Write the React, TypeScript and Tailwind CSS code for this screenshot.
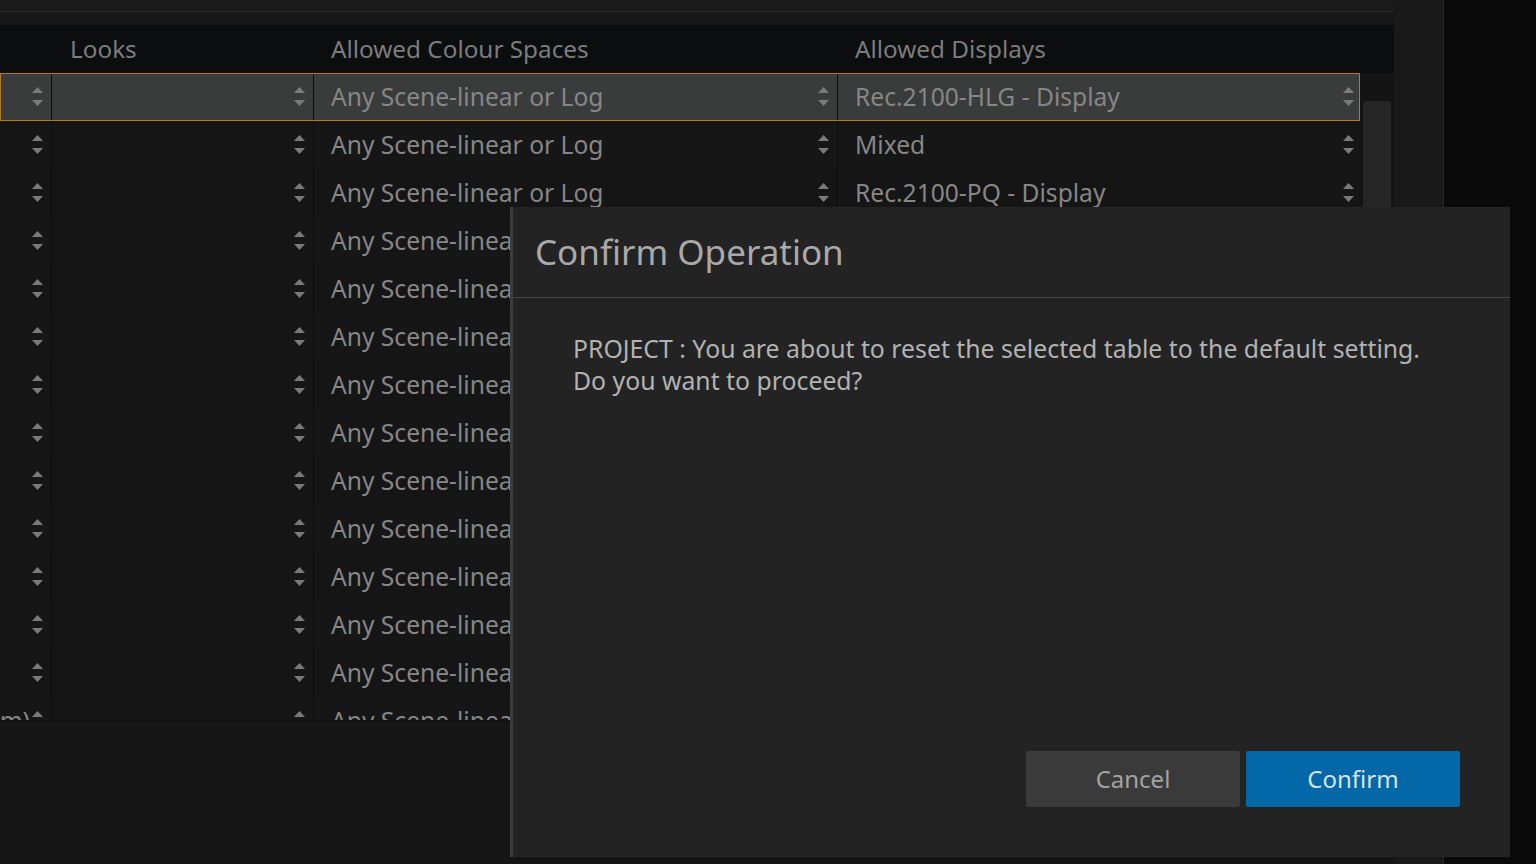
const font = { fontFamily: '"Noto Sans", "Open Sans", sans-serif' };

const Spinner = () => (
  <svg width="11" height="20" viewBox="0 0 11 20" className="shrink-0">
    <polygon points="0,6 5.5,0 11,6" fill="#7a7a7a" />
    <polygon points="0,13 11,13 5.5,19" fill="#7a7a7a" />
  </svg>
);

type Row = { colour: string; display: string; left?: string };

const rows: Row[] = [
  { colour: "Any Scene-linear or Log", display: "Rec.2100-HLG - Display" },
  { colour: "Any Scene-linear or Log", display: "Mixed" },
  { colour: "Any Scene-linear or Log", display: "Rec.2100-PQ - Display" },
  ...Array.from({ length: 10 }, () => ({ colour: "Any Scene-linear or Log", display: "" })),
  { colour: "Any Scene-linear or Log", display: "", left: "m)" },
];

const TableRow = ({ row, index }: { row: Row; index: number }) => {
  const selected = index === 0;
  const bg = selected ? "bg-[#3a3b3b]" : index % 2 === 0 ? "bg-[#151515]" : "bg-[#161616]";
  return (
    <div
      className={`relative flex h-[48px] w-[1360px] shrink-0 text-[24.6px] text-[#868686] ${bg} ${
        selected ? "after:absolute after:inset-0 after:border after:border-[#b07a22] after:pointer-events-none" : ""
      }`}
    >
      <div className="flex w-[52px] shrink-0 items-center justify-end border-r border-[#0c0c0c] pr-[8px]">
        {row.left && <span className="mr-[2px] whitespace-nowrap">{row.left}</span>}
        <Spinner />
      </div>
      <div className="flex w-[262px] shrink-0 items-center justify-end border-r border-[#0c0c0c] pr-[8px]">
        <Spinner />
      </div>
      <div className="flex w-[524px] shrink-0 items-center justify-between border-r border-[#0c0c0c] pl-[17px] pr-[8px]">
        <span className="whitespace-nowrap">{row.colour}</span>
        <Spinner />
      </div>
      <div className="flex w-[522px] shrink-0 items-center justify-between pl-[17px] pr-[6px]">
        <span className="whitespace-nowrap">{row.display}</span>
        <Spinner />
      </div>
    </div>
  );
};

export default function App() {
  return (
    <div className="relative flex h-[864px] w-[1536px] overflow-hidden bg-[#0a0a0a]" style={font}>
      <div className="flex w-[1444px] shrink-0 border-r border-[#2a2a2a] bg-[#151515]">
        <div className="flex w-[1394px] shrink-0 flex-col">
          <div className="h-[11px] bg-[#1a1a1a]" />
          <div className="h-[1px] bg-[#2b2b2b]" />
          <div className="h-[13px] bg-[#171717]" />
          <div className="flex h-[48px] items-center bg-[#0b0d0e] text-[24.3px] text-[#7c7c7c]">
            <div className="w-[52px] shrink-0" />
            <div className="w-[262px] shrink-0 pl-[18px]">Looks</div>
            <div className="w-[524px] shrink-0 pl-[17px]">Allowed Colour Spaces</div>
            <div className="pl-[17px]">Allowed Displays</div>
          </div>
          <div className="flex h-[647px] overflow-hidden">
            <div className="flex w-[1360px] shrink-0 flex-col">
              {rows.map((r, i) => (
                <TableRow key={i} row={r} index={i} />
              ))}
            </div>
            <div className="flex-1 bg-[#141414] px-[3px] pt-[28px]">
              <div className="h-[360px] rounded-[3px] bg-[#262626]" />
            </div>
          </div>
          <div className="flex-1 border-t border-[#0f0f0f] bg-[#151515]" />
        </div>
        <div className="flex-1 bg-[#191919]" />
      </div>

      <div className="absolute left-[510px] top-[207px] flex h-[650px] w-[1000px] flex-col border-l-[3px] border-[#3d3d3d] bg-[#232323]">
        <div className="flex h-[91px] items-center border-b border-[#454545] pl-[22px] text-[35px] text-[#a9a9a9]">
          Confirm Operation
        </div>
        <div className="flex-1 pl-[60px] pt-[34px] text-[24.8px] leading-[32px] text-[#b2b2b2]">
          <p>PROJECT : You are about to reset the selected table to the default setting.</p>
          <p>Do you want to proceed?</p>
        </div>
        <div className="flex justify-end gap-[6px] pb-[50px] pr-[50px]">
          <button className="h-[56px] w-[214px] rounded-[2px] bg-[#3a3a3a] text-[24px] text-[#a3a3a3]">Cancel</button>
          <button className="h-[56px] w-[214px] rounded-[2px] bg-[#0468a8] text-[24px] text-[#d6e2ec]">Confirm</button>
        </div>
      </div>
    </div>
  );
}
